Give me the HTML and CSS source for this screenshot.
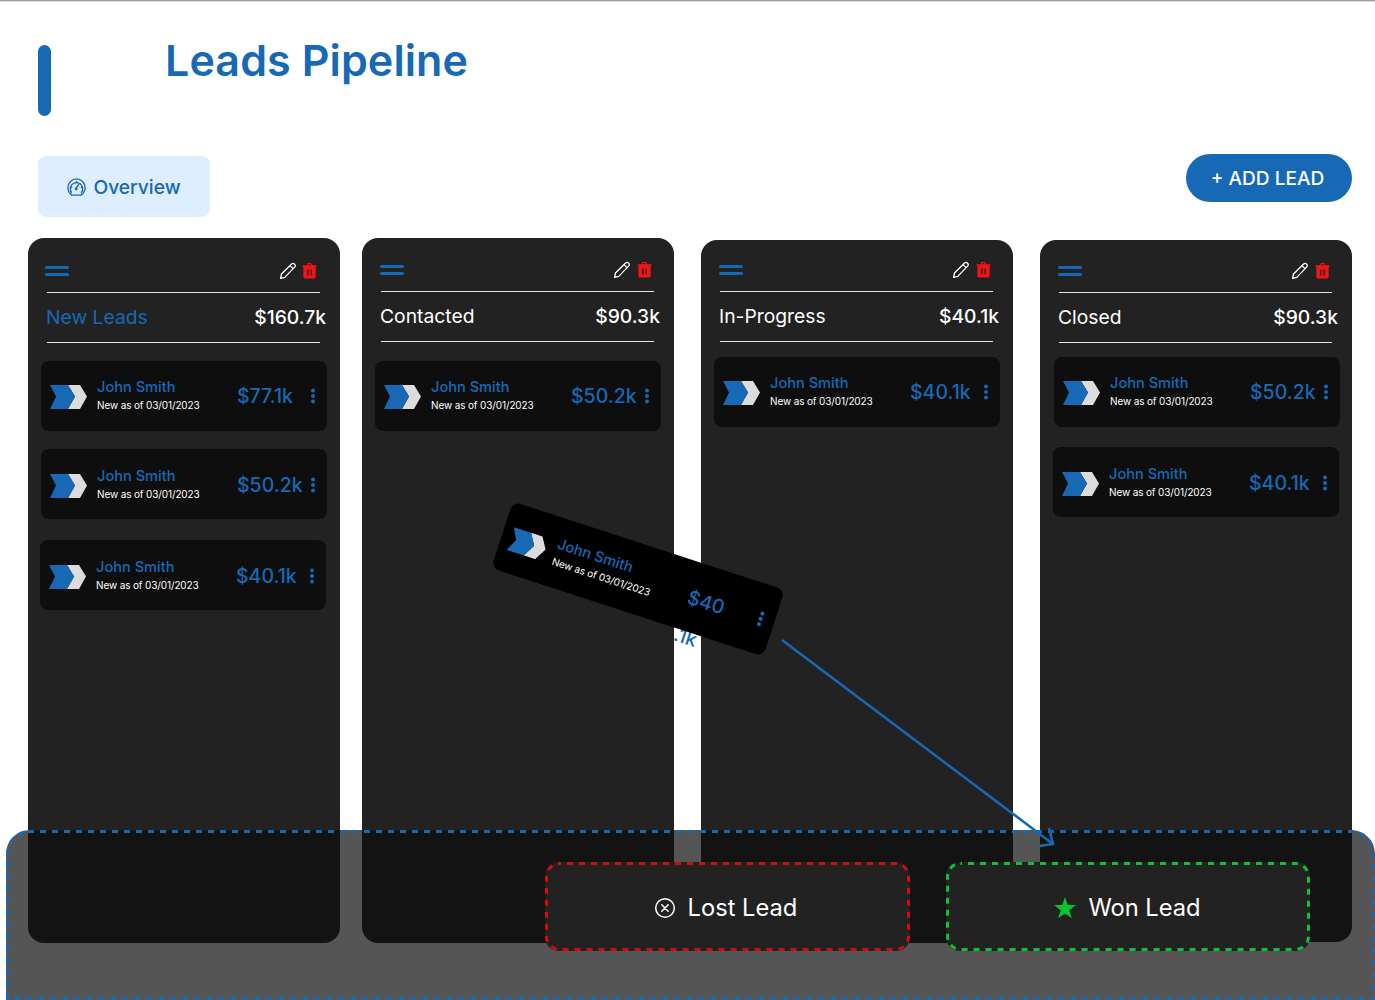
FILE: index.html
```html
<!DOCTYPE html>
<html lang="en">
<head>
<meta charset="utf-8">
<title>Leads Pipeline</title>
<link rel="stylesheet" href="styles.css">
</head>
<body>
<svg class="defs" width="0" height="0" aria-hidden="true">
  <symbol id="chevron" viewBox="0 0 37 25">
    <polygon points="18,1 30,1 37,12.5 30,25 18,25 25,12.5" fill="#dcdcdc"/>
    <polygon points="0,1 18,1 25,12.5 18,25 0,25 6,12.5" fill="#1769b5"/>
  </symbol>
  <symbol id="pencil" viewBox="0 0 18 18">
    <path d="M1.6 16.4 2.5 12 12.6 2 Q14 .8 15.4 2 16.9 3.4 15.8 4.9L5.8 15.4Z M11 3.6 14.3 6.9" fill="none" stroke="#fff" stroke-width="1.3" stroke-linejoin="round"/>
  </symbol>
  <symbol id="trash" viewBox="0 0 16 18">
    <path d="M.5 3.4H5.1C5.3 1.6 6.2.8 8 .8S10.7 1.6 10.9 3.4H15.5V4.6H14.6V15C14.6 16.6 13.6 17.6 12 17.6H4C2.4 17.6 1.4 16.6 1.4 15V4.6H.5Z M6.4 3.4H9.6C9.4 2.5 8.9 2.1 8 2.1S6.6 2.5 6.4 3.4Z M5.5 8V14H7V8Z M9 8V14H10.500V8Z" fill="#f01414" fill-rule="evenodd"/>
  </symbol>
  <symbol id="dots" viewBox="0 0 6 16">
    <circle cx="3" cy="2.500" r="2" fill="#1769b5"/>
    <circle cx="3" cy="8" r="2" fill="#1769b5"/>
    <circle cx="3" cy="13.500" r="2" fill="#1769b5"/>
  </symbol>
</svg>

<div class="page">
  <header class="title-row">
    <span class="title-bar"></span>
    <h1 class="title">Leads Pipeline</h1>
  </header>

  <div class="toolbar">
    <a class="tab">
      <svg class="tab-icon" viewBox="0 0 20 20"><path d="M5.200 18H14.800C17.500 16.300 19 13.400 19 10A9 9 0 0 0 1 10C1 13.400 2.500 16.300 5.200 18Z M4.800 15.200A6.500 6.500 0 1 1 15.200 15.200 M9.200 11.200 12.300 6.700 M3.500 10H5M15 10H16.500M10 3.500V5" fill="none" stroke="#1769b5" stroke-width="1.400" stroke-linecap="round"/><circle cx="9.600" cy="11.600" r="1.500" fill="#1769b5"/></svg>
      <span>Overview</span>
    </a>
    <button class="add-lead">+ ADD LEAD</button>
  </div>

  <main class="board">
    <section class="column column-a">
      <div class="column-head">
        <span class="menu"><i></i><i></i></span>
        <svg class="icon-pencil"><use href="#pencil"/></svg>
        <svg class="icon-trash"><use href="#trash"/></svg>
      </div>
      <div class="summary">
        <span class="summary-name summary-name-active">New Leads</span>
        <span class="summary-total">$160.7k</span>
      </div>
      <div class="cards">
        <article class="card">
          <svg class="card-logo"><use href="#chevron"/></svg>
          <div class="card-text"><div class="card-name">John Smith</div><div class="card-date">New as of 03/01/2023</div></div>
          <div class="card-amount">$77.1k</div>
          <svg class="card-dots"><use href="#dots"/></svg>
        </article>
        <article class="card card-low card-gap-18">
          <svg class="card-logo"><use href="#chevron"/></svg>
          <div class="card-text"><div class="card-name">John Smith</div><div class="card-date">New as of 03/01/2023</div></div>
          <div class="card-amount">$50.2k</div>
          <svg class="card-dots"><use href="#dots"/></svg>
        </article>
        <article class="card card-low card-gap-21 card-nudge">
          <svg class="card-logo"><use href="#chevron"/></svg>
          <div class="card-text"><div class="card-name">John Smith</div><div class="card-date">New as of 03/01/2023</div></div>
          <div class="card-amount">$40.1k</div>
          <svg class="card-dots"><use href="#dots"/></svg>
        </article>
      </div>
    </section>

    <section class="column column-b">
      <div class="column-head">
        <span class="menu"><i></i><i></i></span>
        <svg class="icon-pencil"><use href="#pencil"/></svg>
        <svg class="icon-trash"><use href="#trash"/></svg>
      </div>
      <div class="summary">
        <span class="summary-name">Contacted</span>
        <span class="summary-total">$90.3k</span>
      </div>
      <div class="cards">
        <article class="card">
          <svg class="card-logo"><use href="#chevron"/></svg>
          <div class="card-text"><div class="card-name">John Smith</div><div class="card-date">New as of 03/01/2023</div></div>
          <div class="card-amount">$50.2k</div>
          <svg class="card-dots"><use href="#dots"/></svg>
        </article>
      </div>
    </section>

    <section class="column column-c">
      <div class="column-head">
        <span class="menu"><i></i><i></i></span>
        <svg class="icon-pencil"><use href="#pencil"/></svg>
        <svg class="icon-trash"><use href="#trash"/></svg>
      </div>
      <div class="summary">
        <span class="summary-name">In-Progress</span>
        <span class="summary-total">$40.1k</span>
      </div>
      <div class="cards">
        <article class="card">
          <svg class="card-logo"><use href="#chevron"/></svg>
          <div class="card-text"><div class="card-name">John Smith</div><div class="card-date">New as of 03/01/2023</div></div>
          <div class="card-amount">$40.1k</div>
          <svg class="card-dots"><use href="#dots"/></svg>
        </article>
      </div>
    </section>

    <section class="column column-d">
      <div class="column-head">
        <span class="menu"><i></i><i></i></span>
        <svg class="icon-pencil"><use href="#pencil"/></svg>
        <svg class="icon-trash"><use href="#trash"/></svg>
      </div>
      <div class="summary">
        <span class="summary-name">Closed</span>
        <span class="summary-total">$90.3k</span>
      </div>
      <div class="cards">
        <article class="card">
          <svg class="card-logo"><use href="#chevron"/></svg>
          <div class="card-text"><div class="card-name">John Smith</div><div class="card-date">New as of 03/01/2023</div></div>
          <div class="card-amount">$50.2k</div>
          <svg class="card-dots"><use href="#dots"/></svg>
        </article>
        <article class="card card-low card-gap-20 card-nudge">
          <svg class="card-logo"><use href="#chevron"/></svg>
          <div class="card-text"><div class="card-name">John Smith</div><div class="card-date">New as of 03/01/2023</div></div>
          <div class="card-amount">$40.1k</div>
          <svg class="card-dots"><use href="#dots"/></svg>
        </article>
      </div>
    </section>
  </main>

  <span class="drag-overflow">.1k</span>

  <article class="card card-dragging">
    <svg class="card-logo"><use href="#chevron"/></svg>
    <div class="card-text"><div class="card-name">John Smith</div><div class="card-date">New as of 03/01/2023</div></div>
    <div class="card-amount card-amount-cut">$40</div>
    <svg class="card-dots"><use href="#dots"/></svg>
  </article>

  <aside class="drop-tray">
    <svg class="tray-outline" viewBox="0 0 1369 170" aria-hidden="true"><path d="M22 1.500H1345A22.500 22.500 0 0 1 1367.500 24V168.500H1.500V24A22.500 22.500 0 0 1 24 1.500Z"/></svg>
    <div class="drop-zone drop-zone-lost">
      <svg class="zone-outline" aria-hidden="true"><rect/></svg>
      <svg class="drop-icon" viewBox="0 0 22 22"><circle cx="11" cy="11" r="9.300" fill="none" stroke="#fff" stroke-width="1.500"/><path d="M7.800 7.800 14.200 14.200M14.200 7.800 7.800 14.200" stroke="#fff" stroke-width="1.500" stroke-linecap="round"/></svg>
      <span>Lost Lead</span>
    </div>
    <div class="drop-zone drop-zone-won">
      <svg class="zone-outline" aria-hidden="true"><rect/></svg>
      <svg class="drop-icon" viewBox="0 0 22 22"><polygon points="11,0 13.700,7.900 22,8.100 15.400,13.200 17.800,21.300 11,16.500 4.200,21.300 6.600,13.200 0,8.100 8.300,7.900" fill="#0ac32f"/></svg>
      <span>Won Lead</span>
    </div>
  </aside>

  <svg class="drag-arrow" viewBox="0 0 1375 1000" aria-hidden="true">
    <path d="M782 640 1053 844M1049 828 1053 844 1039 846" fill="none" stroke="#1769b5" stroke-width="2.500"/>
  </svg>
</div>
</body>
</html>
```
FILE: styles.css
```css
* { box-sizing: border-box; }

html, body {
  margin: 0;
  padding: 0;
  background: #fff;
}

body {
  font-family: "Inter", "Noto Sans", sans-serif;
  color: #fff;
}

.defs { position: absolute; }

.page {
  position: relative;
  width: 1375px;
  height: 1000px;
  overflow: hidden;
  padding-top: 45px;
}

.page::before {
  content: "";
  position: absolute;
  top: 0;
  left: 0;
  right: 0;
  height: 2px;
  background: linear-gradient(#a39a9a 50%, #dcd8d8 50%);
}

.title-row {
  display: flex;
  align-items: flex-start;
  height: 71px;
  padding-left: 38px;
}

.title-bar {
  width: 13px;
  height: 71px;
  border-radius: 7px;
  background: #1769b5;
}

.title {
  margin: 0 0 0 114px;
  font-size: 43px;
  line-height: 30px;
  font-weight: 600;
  letter-spacing: 0.1px;
  color: #1769b5;
}

.toolbar {
  display: flex;
  justify-content: space-between;
  align-items: flex-start;
  height: 63px;
  margin-top: 38px;
  padding: 0 23px 0 38px;
}

.tab {
  display: flex;
  align-items: center;
  justify-content: center;
  gap: 7px;
  width: 172px;
  height: 61px;
  margin-top: 2px;
  padding: 1px 0 0 0;
  border-radius: 8px;
  background: #dceeff;
  color: #1769b5;
  font-size: 19.200px;
  font-weight: 500;
}

.tab-icon { width: 19px; height: 19px; }

.add-lead {
  width: 166px;
  height: 48px;
  padding: 0 3px 0 0;
  border: 0;
  border-radius: 24px;
  background: #1769b5;
  color: #fff;
  font-family: inherit;
  font-size: 19.100px;
  font-weight: 500;
}

.board {
  display: flex;
  align-items: flex-start;
  margin-top: 21px;
  padding-left: 28px;
}

.column {
  position: relative;
  z-index: 1;
  width: 312px;
  height: 705px;
  padding: var(--head-top) 13px 0;
  border-radius: 16px;
  background: #222;
}

.column-a { --head-top: 24px; --list-top: 18px; }
.column-b { --head-top: 23px; --list-top: 19px; margin-left: 22px; }
.column-c { --head-top: 21px; --list-top: 15px; margin-left: 27px; margin-top: 2px; height: 703px; }
.column-d { --head-top: 22px; --list-top: 14px; margin-left: 27px; margin-top: 2px; height: 702px; }

.column-head {
  display: flex;
  align-items: center;
  height: 17px;
  padding: 0 9px 0 5px;
}

.column-a .column-head { padding: 0 10px 0 4px; }

.menu {
  display: flex;
  flex-direction: column;
  gap: 4px;
  width: 24px;
  margin-top: 1px;
  margin-right: auto;
}

.menu i {
  display: block;
  height: 3px;
  border-radius: 2px;
  background: #1769b5;
}

.icon-pencil { width: 18px; height: 18px; }
.icon-trash { width: 15px; height: 17px; margin-left: 6px; }
.column-a .icon-trash { margin-left: 5px; }

.summary {
  display: flex;
  align-items: center;
  justify-content: space-between;
  height: 51px;
  margin: 13px 0 0;
  padding: 0 1px 2px 5px;
  position: relative;
  font-size: 19.300px;
}

.summary::before,
.summary::after {
  content: "";
  position: absolute;
  left: 6px;
  right: 7px;
  height: 1px;
  background: #e4e4e4;
}

.summary::before { top: 0; }
.summary::after { bottom: 0; }

.summary-name { font-weight: 400; }
.summary-name-active { color: #1769b5; }
.summary-total { font-weight: 500; }

.cards {
  display: flex;
  flex-direction: column;
  margin-top: var(--list-top);
}

.column-d .cards { margin-left: 1px; }

.card {
  display: flex;
  align-items: center;
  width: 286px;
  height: 70px;
  padding: 0 11px 0 9px;
  border-radius: 8px;
  background: #0e0e0e;
}

.card-low { padding-top: 2px; }
.card-gap-18 { margin-top: 18px; }
.card-gap-20 { margin-top: 20px; }
.card-gap-21 { margin-top: 21px; }
.card-nudge { margin-left: -1px; }

.card-logo {
  flex: none;
  width: 37px;
  height: 25px;
}

.card-text {
  flex: 1;
  margin-left: 10px;
}

.card-name {
  font-size: 14.600px;
  line-height: 18px;
  font-weight: 500;
  color: #1769b5;
}

.card-date {
  font-size: 10px;
  line-height: 18px;
  letter-spacing: -0.13px;
}

.card-amount {
  flex: none;
  width: 73px;
  font-size: 19.500px;
  font-weight: 500;
  color: #1769b5;
}

.card-amount-cut { margin-top: 2px; }

.card-dots {
  flex: none;
  width: 6px;
  height: 16px;
}

.card-dragging {
  position: absolute;
  z-index: 2;
  left: 495px;
  top: 544px;
  background: #000;
  transform: rotate(18deg);
}

.drag-overflow {
  position: absolute;
  z-index: 0;
  left: 674px;
  top: 625px;
  font-size: 19.500px;
  font-weight: 500;
  color: #1769b5;
  transform: rotate(18deg);
}

.drop-tray {
  position: absolute;
  z-index: 3;
  left: 6px;
  right: 0;
  bottom: 0;
  height: 170px;
  display: flex;
  justify-content: flex-end;
  gap: 36px;
  padding: 32px 65px 0 0;
  border-radius: 24px 24px 0 0;
  background: rgba(13, 13, 13, 0.7);
}

.tray-outline {
  position: absolute;
  left: 0;
  top: 0;
  width: 100%;
  height: 100%;
}

.tray-outline path {
  fill: none;
  stroke: #1769b5;
  stroke-width: 3;
  stroke-dasharray: 6 6;
}

.drop-zone {
  position: relative;
  display: flex;
  align-items: center;
  justify-content: center;
  gap: 12px;
  width: 364px;
  height: 89px;
  padding-top: 2px;
  border-radius: 14px;
  background: #222;
  font-size: 23.700px;
  font-weight: 400;
}

.drop-zone-lost { width: 365px; padding-right: 4px; --zone-line: #d80a0a; }
.drop-zone-won { --zone-line: #0ac32f; padding-right: 1px; }

.zone-outline {
  position: absolute;
  left: 0;
  top: 0;
  width: 100%;
  height: 100%;
}

.zone-outline rect {
  x: 1.500px;
  y: 1.500px;
  width: calc(100% - 3px);
  height: calc(100% - 3px);
  rx: 13px;
  fill: none;
  stroke: var(--zone-line);
  stroke-width: 3;
  stroke-dasharray: 6 6;
  stroke-dashoffset: -7.500;
}

.drop-icon { width: 22px; height: 22px; }

.drag-arrow {
  position: absolute;
  z-index: 4;
  left: 0;
  top: 0;
  width: 1375px;
  height: 1000px;
  pointer-events: none;
}
```
